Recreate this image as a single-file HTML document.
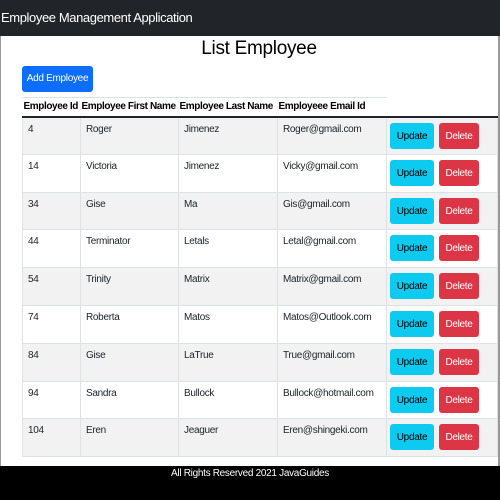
<!DOCTYPE html>
<html><head><style>
*{box-sizing:border-box;margin:0;padding:0}
body{width:500px;height:500px;overflow:hidden;background:#fff;font-family:"Liberation Sans",sans-serif;color:#212529;position:relative;letter-spacing:-0.3px}
.hdr{position:absolute;left:0;top:0;width:500px;height:36px;background:#212529;color:#fff;font-size:13px;line-height:36px;padding-left:1px;letter-spacing:-0.4px}
.lb{position:absolute;left:0;top:36px;width:1px;height:430px;background:#999}
.rb{position:absolute;right:0;top:36px;width:2px;height:430px;background:#999}
h2{position:absolute;left:0;width:518px;top:38px;text-align:center;font-weight:normal;font-size:19px;color:#000}
.add{position:absolute;left:22px;top:66px;width:71px;height:26px;background:#0d6efd;color:#fff;border-radius:3px;font-size:10px;line-height:26px;text-align:center;white-space:nowrap}
table{position:absolute;left:22px;top:97px;width:475px;border-collapse:collapse;font-size:10px;table-layout:fixed}
th{text-align:left;font-weight:bold;height:19px;border-top:1px solid #dee2e6;border-bottom:2px solid #212529;padding:0 1px;font-size:10px;color:#000;white-space:nowrap;overflow:hidden;letter-spacing:-0.4px}
th.e{border-top:none}
td{border:1px solid #dee2e6;height:37.8px;vertical-align:top;padding:6px 5px;color:#212529;white-space:nowrap;overflow:hidden}
tr:nth-child(odd) td{background:#f2f2f2}
td.b{padding:4px 3px}
.u,.d{display:inline-block;height:26px;line-height:27px;border-radius:3px;font-size:10px;text-align:center;vertical-align:top;margin-top:1px}
.u{background:#0dcaf0;color:#000;width:44px}
.d{background:#dc3545;color:#fff;width:40px;margin-left:5px}
.ft{position:absolute;left:0;top:466px;width:500px;height:34px;background:#000;color:#fff;font-size:10px;text-align:center;padding-top:2px}
</style></head><body>
<div class="hdr">Employee Management Application</div>
<div class="lb"></div><div class="rb"></div>
<h2>List Employee</h2>
<div class="add">Add Employee</div>
<table>
<colgroup><col style="width:58px"><col style="width:98px"><col style="width:99px"><col style="width:109px"><col style="width:111px"></colgroup>
<thead><tr><th>Employee Id</th><th>Employee First Name</th><th>Employee Last Name</th><th>Employeee Email Id</th><th class="e"></th></tr></thead>
<tbody>
<tr><td>4</td><td>Roger</td><td>Jimenez</td><td>Roger@gmail.com</td><td class="b"><span class="u">Update</span><span class="d">Delete</span></td></tr>
<tr><td>14</td><td>Victoria</td><td>Jimenez</td><td>Vicky@gmail.com</td><td class="b"><span class="u">Update</span><span class="d">Delete</span></td></tr>
<tr><td>34</td><td>Gise</td><td>Ma</td><td>Gis@gmail.com</td><td class="b"><span class="u">Update</span><span class="d">Delete</span></td></tr>
<tr><td>44</td><td>Terminator</td><td>Letals</td><td>Letal@gmail.com</td><td class="b"><span class="u">Update</span><span class="d">Delete</span></td></tr>
<tr><td>54</td><td>Trinity</td><td>Matrix</td><td>Matrix@gmail.com</td><td class="b"><span class="u">Update</span><span class="d">Delete</span></td></tr>
<tr><td>74</td><td>Roberta</td><td>Matos</td><td>Matos@Outlook.com</td><td class="b"><span class="u">Update</span><span class="d">Delete</span></td></tr>
<tr><td>84</td><td>Gise</td><td>LaTrue</td><td>True@gmail.com</td><td class="b"><span class="u">Update</span><span class="d">Delete</span></td></tr>
<tr><td>94</td><td>Sandra</td><td>Bullock</td><td>Bullock@hotmail.com</td><td class="b"><span class="u">Update</span><span class="d">Delete</span></td></tr>
<tr><td>104</td><td>Eren</td><td>Jeaguer</td><td>Eren@shingeki.com</td><td class="b"><span class="u">Update</span><span class="d">Delete</span></td></tr>
</tbody></table>
<div class="ft">All Rights Reserved 2021 JavaGuides</div>
</body></html>
